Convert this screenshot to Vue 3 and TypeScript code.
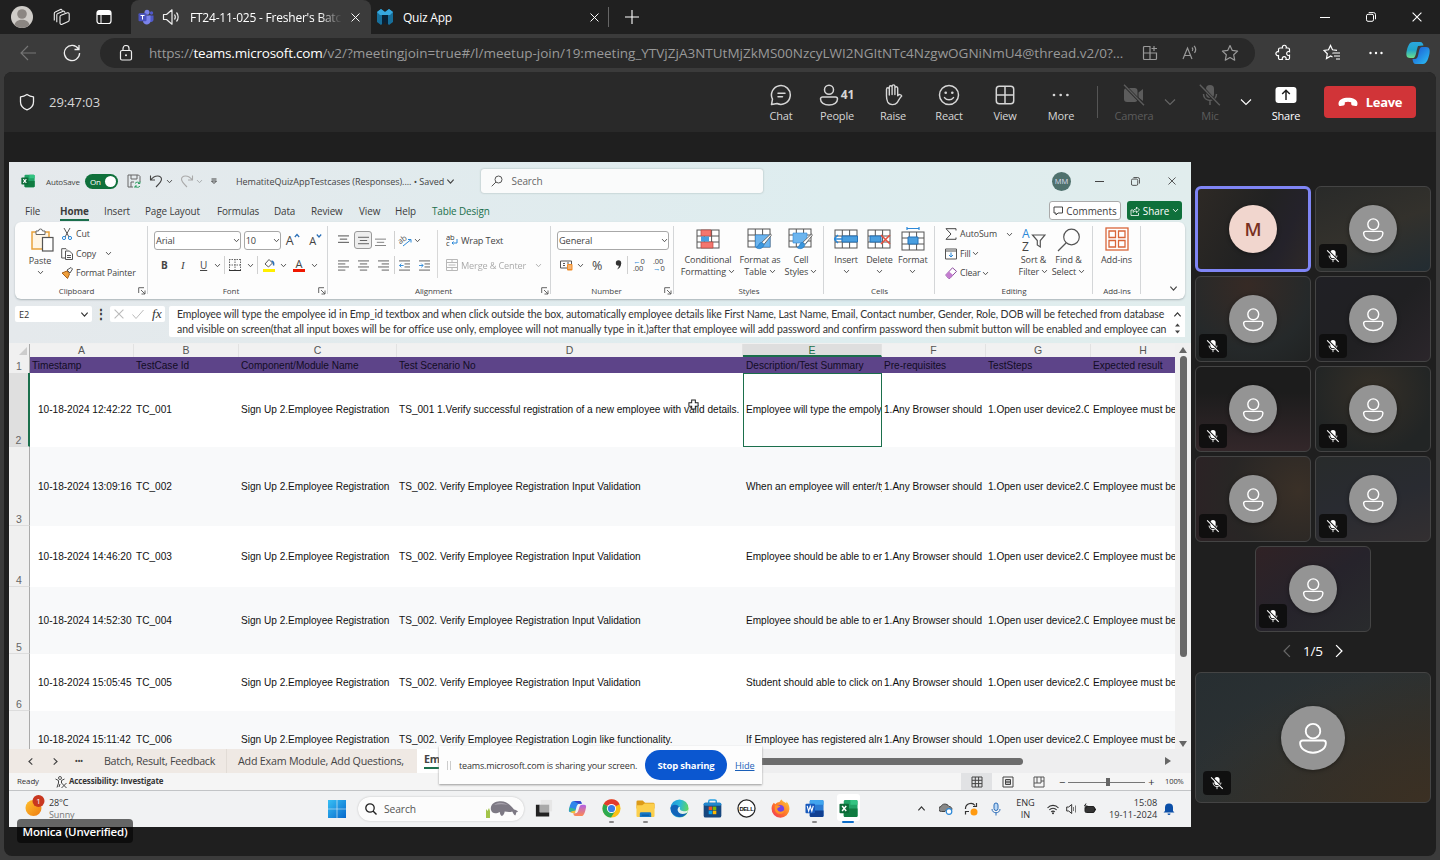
<script setup lang="ts">
interface MeetingAction { label: string; icon: string; count?: number }
interface RibbonTab { label: string; width: number; kind?: string }
interface SheetRow { id: number; height: number; cells: string[] }
interface Tile { tone: string; initial?: string }

const actions: MeetingAction[] = [
  { label: 'Chat', icon: 'chat' },
  { label: 'People', icon: 'people', count: 41 },
  { label: 'Raise', icon: 'hand' },
  { label: 'React', icon: 'smile' },
  { label: 'View', icon: 'view' },
  { label: 'More', icon: 'more' },
]

const ribbonTabs: RibbonTab[] = [
  { label: 'File', width: 35 },
  { label: 'Home', width: 44, kind: 'current' },
  { label: 'Insert', width: 41 },
  { label: 'Page Layout', width: 72 },
  { label: 'Formulas', width: 57 },
  { label: 'Data', width: 37 },
  { label: 'Review', width: 48 },
  { label: 'View', width: 36 },
  { label: 'Help', width: 37 },
  { label: 'Table Design', width: 70, kind: 'context' },
]

const columns = ['A', 'B', 'C', 'D', 'E', 'F', 'G', 'H']
const headings = ['Timestamp', 'TestCase Id', 'Component/Module Name', 'Test Scenario No', 'Description/Test Summary', 'Pre-requisites', 'TestSteps', 'Expected result']

const makeRow = (id: number, height: number, time: string, scenario: string, summary: string): SheetRow => ({
  id,
  height,
  cells: [
    `10-18-2024 ${time}`,
    `TC_00${id - 1}`,
    'Sign Up 2.Employee Registration',
    scenario,
    summary,
    '1.Any Browser should',
    '1.Open user device2.Open',
    'Employee must be able',
  ],
})

const validation = 'TS_002. Verify Employee Registration Input Validation'
const rows: SheetRow[] = [
  makeRow(2, 74, '12:42:22', 'TS_001 1.Verify successful registration of a new employee with valid details.', 'Employee will type the empolyee id'),
  makeRow(3, 79, '13:09:16', validation, 'When an employee will enter/type'),
  makeRow(4, 61, '14:46:20', validation, 'Employee should be able to enter'),
  makeRow(5, 67, '14:52:30', validation, 'Employee should be able to enter'),
  makeRow(6, 57, '15:05:45', validation, 'Student should able to click on'),
  makeRow(7, 58, '15:11:42', 'TS_002. Verify Employee Registration Login like functionality.', 'If Employee has registered already'),
]

const tiles: Tile[] = [
  { tone: 't1', initial: 'M' }, { tone: 't2' }, { tone: 't3' }, { tone: 't4' }, { tone: 't5' },
  { tone: 't6' }, { tone: 't7' }, { tone: 't8' }, { tone: 't9' },
]

const taskbarApps = ['taskview', 'copilot2', 'chrome', 'folder', 'edge', 'store', 'dell', 'firefox', 'word', 'excel']
</script>

<template>
  <div class="screen">
    <svg class="defs" aria-hidden="true">
      <defs>
        <linearGradient id="gTeal" x1="0" y1="0" x2="0" y2="1"><stop offset="0" stop-color="#29a8e0" /><stop offset=".5" stop-color="#22a5c8" /><stop offset="1" stop-color="#6ee08a" /></linearGradient>
        <linearGradient id="gBlue" x1="0" y1="0" x2="1" y2="1"><stop offset="0" stop-color="#1a4fd0" /><stop offset="1" stop-color="#2cc3f5" /></linearGradient>
        <linearGradient id="gPink" x1="0" y1="0" x2="0" y2="1"><stop offset="0" stop-color="#b060e8" /><stop offset="1" stop-color="#ff8a50" /></linearGradient>
        <linearGradient id="gSun" x1="0" y1="0" x2="1" y2="1"><stop offset="0" stop-color="#ffc22e" /><stop offset="1" stop-color="#ee7a10" /></linearGradient>
        <linearGradient id="gWin" x1="0" y1="0" x2="1" y2="1"><stop offset="0" stop-color="#38c0f5" /><stop offset="1" stop-color="#0568cc" /></linearGradient>
        <linearGradient id="gEdge" x1="0" y1=".3" x2="1" y2=".5"><stop offset="0" stop-color="#1c96dc" /><stop offset=".5" stop-color="#2cb8d8" /><stop offset="1" stop-color="#62d85c" /></linearGradient>
        <linearGradient id="gFox" x1="1" y1="0" x2="0" y2="1"><stop offset="0" stop-color="#ffd23c" /><stop offset=".5" stop-color="#ff7a2a" /><stop offset="1" stop-color="#f0305c" /></linearGradient>
      </defs>
      <symbol id="chev" viewBox="0 0 10 10"><path d="M1.500 3l3.500 3.700L8.500 3" fill="none" stroke="currentColor" stroke-width="1.300" /></symbol>
      <symbol id="chev-thin" viewBox="0 0 12 12"><path d="M1 3.500l5 5 5-5" fill="none" stroke="currentColor" stroke-width="1.100" /></symbol>
      <symbol id="x" viewBox="0 0 10 10"><path d="M.6.6l8.800 8.800M9.400.6L.6 9.400" fill="none" stroke="currentColor" stroke-width="1.100" /></symbol>
      <symbol id="restore" viewBox="0 0 10 10"><g fill="none" stroke="currentColor"><rect x=".5" y="2.300" width="7" height="7" rx="1.500" /><path d="M2.700.6H7.500a2 2 0 012 2V7.300" /></g></symbol>
      <symbol id="chat" viewBox="0 0 22 22"><g fill="none" stroke="currentColor" stroke-width="1.500" stroke-linecap="round"><path d="M1.500 20.500l1-5.300A9.400 9.400 0 117 19.500z" stroke-linejoin="round" /><path d="M8 9.200h7M8 12.800h4.500" /></g></symbol>
      <symbol id="people" viewBox="0 0 22 22"><g fill="none" stroke="currentColor" stroke-width="1.500"><circle cx="11" cy="5.700" r="4.500" /><path d="M4.500 13h13a2 2 0 012 2c0 3.500-3.500 6-8.500 6s-8.500-2.500-8.500-6a2 2 0 012-2z" /></g></symbol>
      <symbol id="hand" viewBox="0 0 22 22"><path d="M4.500 12V5.200a1.400 1.400 0 012.800 0V11 3.200a1.400 1.400 0 012.800 0V10.500 2.300a1.400 1.400 0 012.800 0V10.500 4.200a1.400 1.400 0 012.800 0v7.500c1.300-1.600 3.300-1.500 4 .3-2.200 2-2.900 4.500-4.700 6.800-1.700 2.200-7.500 2.800-9.300-.8-.7-1.500-1.200-3.500-1.200-6z" fill="none" stroke="currentColor" stroke-width="1.400" stroke-linejoin="round" /></symbol>
      <symbol id="smile" viewBox="0 0 22 22"><circle cx="11" cy="11" r="9.500" fill="none" stroke="currentColor" stroke-width="1.500" /><circle cx="7.700" cy="8.800" r="1.300" fill="currentColor" /><circle cx="14.300" cy="8.800" r="1.300" fill="currentColor" /><path d="M6.500 13.600c2.300 3 6.700 3 9 0" fill="none" stroke="currentColor" stroke-width="1.500" stroke-linecap="round" /></symbol>
      <symbol id="view" viewBox="0 0 22 22"><g fill="none" stroke="currentColor" stroke-width="1.500"><rect x="2.300" y="2.300" width="17.400" height="17.400" rx="3" /><path d="M11 2.300v17.400M2.300 11h17.400" /></g></symbol>
      <symbol id="more" viewBox="0 0 22 22"><g fill="currentColor"><circle cx="4" cy="11" r="1.350" /><circle cx="10.700" cy="11" r="1.350" /><circle cx="17.400" cy="11" r="1.350" /></g></symbol>
      <symbol id="person" viewBox="0 0 24 26"><g fill="none" stroke="#fff" stroke-width="1.500"><circle cx="12" cy="7.500" r="5.800" /><path d="M3.700 15h16.600a2 2 0 012 2c0 4.200-4.300 7.800-10.300 7.800S1.700 21.200 1.700 17a2 2 0 012-2z" /></g></symbol>
      <symbol id="muted" viewBox="0 0 16 16"><rect x="5" y="1" width="6" height="9.500" rx="3" fill="#fff" /><path d="M3.500 7.500c0 6.200 9 6.200 9 0M8 12v3" fill="none" stroke="#eee" stroke-width="1.100" /><path d="M2.500 1.500l12.500 12.500" stroke="#111" stroke-width="1.500" /><path d="M1.300 1.500l13.200 13.200" stroke="#fff" stroke-width="1.200" /></symbol>
      <symbol id="launcher" viewBox="0 0 8 8"><path d="M.7 6V.7H6M3 3l4 4M7 3.500V7H3.500" fill="none" stroke="#555" stroke-width=".9" /></symbol>
      <symbol id="sheet" viewBox="0 0 24 20"><g fill="#fff" stroke="#555"><rect x="1" y="1" width="22" height="18" /><path d="M1 7h22M1 13h22M8.300 1v18M15.600 1v18" /></g></symbol>
      <symbol id="brush" viewBox="0 0 20 20"><path d="M18.500 1L8 11l2.500 2.500L19 3z" fill="#fff" stroke="#555" /><path d="M8 11c-4 0-3 5-7 6 4 3 9 1 9.500-3.500z" fill="#3a96dd" stroke="#2472b8" stroke-width=".7" /></symbol>
      <symbol id="excel" viewBox="0 0 20 20"><rect x="5" y="1" width="14.500" height="18" rx="1.500" fill="#21a366" /><path d="M12 1h6a1.500 1.500 0 011.500 1.500V6H12z" fill="#33c481" /><path d="M5 10h14.500v7.500A1.500 1.500 0 0118 19H6.500A1.500 1.500 0 015 17.500z" fill="#107c41" /><rect x=".5" y="5" width="10" height="10" rx="1" fill="#0d6b38" /><path d="M3.300 7.300l4.300 5.400M7.600 7.300l-4.300 5.400" stroke="#fff" stroke-width="1.500" /></symbol>
      <symbol id="word" viewBox="0 0 20 20"><rect x="5" y="1" width="14.500" height="18" rx="1.500" fill="#2b7cd3" /><path d="M6.500 1H18a1.500 1.500 0 011.500 1.500V6H5V2.500A1.500 1.500 0 016.500 1z" fill="#41a5ee" /><path d="M5 12h14.500v5.500A1.500 1.500 0 0118 19H6.500A1.500 1.500 0 015 17.500z" fill="#103f91" /><rect x=".5" y="5" width="10" height="10" rx="1" fill="#185abd" /><path d="M2.300 7.300l1.500 5.400 1.700-5 1.700 5 1.500-5.400" stroke="#fff" stroke-width="1.200" fill="none" /></symbol>
      <symbol id="taskview" viewBox="0 0 20 20"><rect x="7" y="1" width="12" height="12" fill="#e6e6e6" /><path d="M2 6h4v8h10v4.500H2z" fill="#222" /><rect x="6" y="6" width="10" height="8" fill="#a9a9a9" /></symbol>
      <symbol id="copilot2" viewBox="0 0 20 20"><path d="M6 2h6c2 0 2 1.500 2.500 3H12c-2 0-2.500 1.500-3.500 5-.8 3-1.500 4-3.500 4H3c-3 0-2-3-1.500-5C2.500 5 3.500 2 6 2z" fill="#2f86ea" /><path d="M14 18H8c-2 0-2-1.500-2.500-3H8c2 0 2.500-1.500 3.500-5 .8-3 1.500-4 3.500-4h2c3 0 2 3 1.500 5-1 4-2 7-4.500 7z" fill="url(#gPink)" /><path d="M2 13.500l6-2-.6 3.500H5.500c-1.500 0-2.500-.5-3.500-1.500z" fill="#f2c038" /><path d="M6 2h6c2 0 2 1.500 2.500 3H11z" fill="#3442cc" /><path d="M1.500 9L8 10.500 7.300 12 2 13.500C1 12.500 1.200 10.500 1.500 9z" fill="#35b890" /></symbol>
      <symbol id="chrome" viewBox="0 0 20 20"><circle cx="10" cy="10" r="9.500" fill="#fbc116" /><path d="M10 10L1.800 5.200A9.500 9.500 0 0118.500 5.500z" fill="#e33b2e" /><path d="M10 10L1.800 5.200A9.500 9.500 0 009.500 19.500L14 12.300z" fill="#2da94f" /><circle cx="10" cy="10" r="4.800" fill="#fff" /><circle cx="10" cy="10" r="3.800" fill="#3a7de8" /></symbol>
      <symbol id="folder" viewBox="0 0 20 20"><path d="M.5 3a1.500 1.500 0 011.500-1.500h5L9.500 4H18a1.500 1.500 0 011.500 1.500V10H.5z" fill="#dc9a18" /><path d="M.5 6.500h6L9 4.700h9.500a1 1 0 011 1V18a1 1 0 01-1 1h-17a1 1 0 01-1-1z" fill="#fccf4c" /><path d="M4 19v-3.500a1.500 1.500 0 011.500-1.500h9a1.500 1.500 0 011.500 1.500V19z" fill="#1478c8" /><path d="M6 17h8" stroke="#0a4f94" /></symbol>
      <symbol id="edge" viewBox="0 0 20 20"><circle cx="10" cy="10" r="9.500" fill="url(#gEdge)" /><path d="M.6 9c2-4 7.500-3.500 8.900-.5-2.500 2-1.500 5.500 1.500 6.800 2.500 1 5 .3 7.200-1A9.500 9.500 0 01.6 9z" fill="#1163b8" /><path d="M10.700 8.500c-1.200 2.500.8 4.500 4 4.400 1.800-.1 3.500-.6 4.600-1.400l-1.100 2.800c-2.200 1.300-4.700 2-7.200 1-3-1.300-4-4.800-1.500-6.800z" fill="#f4f4f4" opacity=".9" /></symbol>
      <symbol id="store" viewBox="0 0 20 20"><path d="M6 5V2.500A1.500 1.500 0 017.500 1h5A1.500 1.500 0 0114 2.500V5" fill="none" stroke="#2ba3e3" stroke-width="1.500" /><rect x=".7" y="4" width="18.600" height="15.500" rx="2" fill="#17477e" /><rect x=".7" y="4" width="18.600" height="3" rx="1.500" fill="#2187cd" /><path d="M6 8h3.700v3.700H6z" fill="#f25022" /><path d="M10.300 8H14v3.700h-3.700z" fill="#7fba00" /><path d="M6 12.300h3.700V16H6z" fill="#00a4ef" /><path d="M10.300 12.300H14V16h-3.700z" fill="#ffb900" /></symbol>
      <symbol id="dell" viewBox="0 0 20 20"><circle cx="10" cy="10" r="9" fill="#fff" stroke="#222" stroke-width="1.300" /><text x="10" y="12.300" font-size="6.200" font-weight="bold" font-family="Liberation Sans, sans-serif" text-anchor="middle" textLength="15" fill="#111">DELL</text></symbol>
      <symbol id="firefox" viewBox="0 0 20 20"><path d="M3 4l1.500 1.500C6 3.800 8 3 9 3.200c.5-1.200 1-2 2.500-2.700 0 2 2.500 2.500 4.500 4 .4-.8.2-1.500 0-2 2.500 2 3.500 5 3.400 8A9.400 9.400 0 01.6 10C.6 7.500 1.500 5.500 3 4z" fill="url(#gFox)" /><circle cx="9.500" cy="10.500" r="4.300" fill="#7542e5" /><path d="M4 7c2-1 4 .3 6 .5-1 1.500-3 1-3.500 3 .5 3 5 4 7.500 1 0 5-8 6-10 0z" fill="#ff9428" /></symbol>
    </svg>

    <header class="tabstrip">
      <svg class="i22" viewBox="0 0 22 22"><circle cx="11" cy="11" r="11" fill="#cfccc8" /><circle cx="11" cy="8" r="4.800" fill="#8b8682" /><path d="M3.500 19c1-7 14-7 15 0a11 11 0 01-15 0z" fill="#8b8682" /></svg>
      <svg class="i18 spaces" viewBox="0 0 18 18"><g fill="none" stroke="#eee" stroke-width="1.100" stroke-linejoin="round"><path d="M1.300 12.500V5.500a1.500 1.500 0 011-1.500L8 1.200l1.500 1.500" /><path d="M3.800 14.300V7a1.500 1.500 0 011-1.400l6-2.600 1.500 1.700" /><path d="M7 8.700a1.500 1.500 0 011-1.400l6.500-2.500a1.300 1.300 0 011.700 1.300V12a1.500 1.500 0 01-1 1.400l-6 2.900A1.500 1.500 0 017 15z" /></g></svg>
      <svg class="i16 tabmenu" viewBox="0 0 16 16"><rect x="1" y="1.500" width="14" height="13" rx="2.500" fill="none" stroke="#fff" stroke-width="1.200" /><path d="M1 6V3.500a2.500 2.500 0 012.500-2h9a2.500 2.500 0 012.500 2V6z" fill="#fff" /><path d="M5 6v8.500" stroke="#fff" /></svg>
      <div class="tab active">
        <svg class="i16" viewBox="0 0 16 16"><circle cx="9" cy="3.200" r="2.500" fill="#7b83eb" /><circle cx="13.500" cy="4" r="1.700" fill="#5059c9" /><path d="M11 6.500h4.500V11a2.500 2.500 0 01-4.500 1z" fill="#5059c9" /><path d="M5 6.500h7.500V12c0 4.500-7.500 4.500-7.500 0z" fill="#7b83eb" /><rect x=".5" y="4.300" width="8" height="8" rx="1" fill="#4b53bc" /><path d="M2.500 6.500h4M4.500 6.500v4" stroke="#fff" /></svg>
        <svg class="i18" viewBox="0 0 18 18"><g fill="none" stroke="#eee" stroke-width="1.200" stroke-linejoin="round"><path d="M1.500 6.500h3L10 1.800v14.400L4.500 11.500h-3zM12.500 6.500c1 1.500 1 3.500 0 5M14.500 4.500c2.200 2.500 2.200 6.500 0 9" /></g></svg>
        <span class="tab-title">FT24-11-025 - Fresher's Batch</span>
        <svg class="i9"><use href="#x" /></svg>
      </div>
      <div class="tab second">
        <svg class="i16" viewBox="0 0 16 16"><path d="M0 3l4-3 4 3 4-3 4 3v10l-4 3-2-2V8H6v6l-2 2-4-3z" fill="#176f9b" /><path d="M0 3l4-3 4 3 4-3 4 3-3 3H3z" fill="#36a8df" /><path d="M5 6h6v9H9L8 12l-1 3H5z" fill="#082237" /></svg>
        <span>Quiz App</span>
        <svg class="i9"><use href="#x" /></svg>
      </div>
      <svg class="i14 newtab" viewBox="0 0 14 14"><path d="M7 0v14M0 7h14" stroke="#fff" stroke-width="1.100" /></svg>
      <div class="window-buttons">
        <svg class="i10" viewBox="0 0 10 10"><path d="M0 5.500h10" stroke="#fff" /></svg>
        <svg class="i10"><use href="#restore" /></svg>
        <svg class="i10"><use href="#x" /></svg>
      </div>
    </header>

    <div class="toolbar">
      <svg class="i16 back" viewBox="0 0 16 16"><path d="M16 8H1M8 1L1 8l7 7" fill="none" stroke="#777" stroke-width="1.100" /></svg>
      <svg class="i18 reload" viewBox="0 0 18 18"><path d="M15.500 5A7.600 7.600 0 1016.600 9M16 1v4.500h-4.500" fill="none" stroke="#eee" stroke-width="1.300" /></svg>
      <div class="address">
        <svg class="i16" viewBox="0 0 16 16"><rect x="2.500" y="5.500" width="11" height="9.500" rx="1.500" fill="none" stroke="#eee" stroke-width="1.200" /><path d="M5 5.500V3.500a3 3 0 016 0v2" fill="none" stroke="#eee" stroke-width="1.200" /><circle cx="8" cy="10.300" r="1" fill="#eee" /></svg>
        <span class="url">https://<b>teams.microsoft.com</b><span class="path">/v2/?meetingjoin=true#/l/meetup-join/19:meeting_YTVjZjA3NTUtMjZkMS00NzcyLWI2NGItNTc4NzgwOGNiNmU4@thread.v2/0?...</span></span>
        <svg class="i16" viewBox="0 0 16 16"><path d="M1.500 8h13v5.500a1 1 0 01-1 1h-11a1 1 0 01-1-1v-11a1 1 0 011-1H8v13M12 1v5M9.500 3.500h5.500" fill="none" stroke="#999" stroke-width="1.200" /></svg>
        <svg class="i16" viewBox="0 0 16 16"><path d="M1 14L5.500 3 10 14M2.700 10.500h5.800M10 2.500c1 1 1 2.500.3 3.500M12 .8c2 2 2 4.800.5 7" fill="none" stroke="#999" stroke-width="1.200" /></svg>
        <svg class="i18" viewBox="0 0 18 18"><path d="M9 1.500l2.300 4.900 5.300.7-3.900 3.700 1 5.400L9 13.500l-4.700 2.700 1-5.400L1.400 7.100l5.300-.7z" fill="none" stroke="#999" stroke-width="1.200" stroke-linejoin="round" /></svg>
      </div>
      <svg class="i18" viewBox="0 0 18 18"><path d="M5 4h2.500a2 2 0 113.700 0H13a1.500 1.500 0 011.500 1.500v2.200a2 2 0 100 3.600V14a1.500 1.500 0 01-1.500 1.500h-2a2 2 0 10-3.600 0H5A1.500 1.500 0 013.500 14v-2.500a2 2 0 110-3.800V5.500A1.500 1.500 0 015 4z" fill="none" stroke="#fff" stroke-width="1.200" /></svg>
      <i class="bar-line"></i>
      <svg class="i18" viewBox="0 0 18 18"><path d="M9.500 12.900l-1.800-1L3.500 14.500l.8-4.800L1 6.500l4.500-.7L7.500 1.500l2 4.300 4.500.5M11 9h6M11 12h6M13 15h4M10.500 8.500l-.8 1.200" fill="none" stroke="#fff" stroke-width="1.200" /></svg>
      <svg class="i14 dots" viewBox="0 0 14 14"><g fill="#fff"><circle cx="1.500" cy="7" r="1.200" /><circle cx="7" cy="7" r="1.200" /><circle cx="12.500" cy="7" r="1.200" /></g></svg>
      <svg class="i24" viewBox="0 0 24 24"><path d="M7 1h7c2.500 0 3 2 3.500 3.500L12 5c-1.500 3-2 12-4.500 12H4C.5 17 0 14 .5 11 1.500 6 3 1 7 1z" fill="url(#gTeal)" /><path d="M17 23h-7c-2.500 0-3-2-3.500-5h2.500c3 0 3-4 4-8s2-4 4-4h3c4 0 4 3.500 3.500 6.500C22.500 17 21 23 17 23z" fill="url(#gBlue)" /></svg>
    </div>

    <main class="meeting">
      <div class="meeting-bar">
        <svg class="i18 shield" viewBox="0 0 18 18"><path d="M9 1.500c2 1.400 4 2.200 6.500 2.300V9c0 4-2.300 6.300-6.500 7.800C4.800 15.300 2.500 13 2.500 9V3.800C5 3.700 7 2.900 9 1.500z" fill="none" stroke="#eee" stroke-width="1.300" stroke-linejoin="round" /></svg>
        <time>29:47:03</time>
        <nav class="actions">
          <button v-for="a in actions" :key="a.label" class="action">
            <span class="glyph"><svg class="i22"><use :href="'#' + a.icon" /></svg><b v-if="a.count">{{ a.count }}</b></span>
            <span>{{ a.label }}</span>
          </button>
        </nav>
        <i class="meeting-line"></i>
        <button class="action off">
          <span class="glyph"><svg class="i22" viewBox="0 0 22 22"><rect x="1" y="4" width="13.500" height="14" rx="3" fill="#5c5c5c" /><path d="M15.500 8.500L20 5v12l-4.500-3.500z" fill="#5c5c5c" /><path d="M1 1l19.500 20" stroke="#292929" stroke-width="3" /><path d="M1 .8l20 20.500" stroke="#5c5c5c" stroke-width="1.400" /></svg></span>
          <span>Camera</span>
        </button>
        <svg class="i12 dim"><use href="#chev-thin" /></svg>
        <button class="action off mic">
          <span class="glyph"><svg class="i22" viewBox="0 0 22 22"><rect x="7" y="1" width="8" height="13" rx="4" fill="#5c5c5c" /><path d="M4.500 10c0 8.500 13 8.500 13 0M11 16.500V21" fill="none" stroke="#5c5c5c" stroke-width="1.500" /><path d="M1.500 1l18 20" stroke="#292929" stroke-width="3" /><path d="M.8.8l20 20.500" stroke="#5c5c5c" stroke-width="1.400" /></svg></span>
          <span>Mic</span>
        </button>
        <svg class="i12 lit"><use href="#chev-thin" /></svg>
        <button class="action share">
          <span class="glyph"><svg class="i22" viewBox="0 0 22 22"><rect x=".5" y="3" width="21" height="16" rx="3" fill="#fff" /><path d="M11 16V6.500M7.200 10L11 6.200l3.800 3.800" fill="none" stroke="#222" stroke-width="1.500" /></svg></span>
          <span>Share</span>
        </button>
        <button class="leave"><svg viewBox="0 0 20 10"><path d="M10 .8c5 0 9.500 2 9.500 5.700 0 2-.8 2.700-2 2.500l-3-.6c-1-.2-1.300-.8-1.300-1.600V5.300c-2-.7-4.400-.7-6.400 0v1.500c0 .8-.3 1.400-1.300 1.600l-3 .6C1.300 9.200.5 8.500.5 6.500.5 2.800 5 .8 10 .8z" fill="#fff" /></svg>Leave</button>
      </div>

      <div class="stage">
        <section class="shared">
          <div class="titlebar">
            <svg class="i14"><use href="#excel" /></svg>
            <span class="autosave">AutoSave</span>
            <span class="toggle">On<i></i></span>
            <svg class="i14" viewBox="0 0 14 14"><path d="M1 1h10.500L13 2.500V8M6 13H1V1M4 1v4h6V1M4 13V8h3" fill="none" stroke="#666" /><path d="M13 9.500a3 3 0 00-5 0M8 12a3 3 0 005 0M13 7.500v2h-2M8 14v-2h2" fill="none" stroke="#2f9e62" /></svg>
            <svg class="i14" viewBox="0 0 14 14"><path d="M1.500 1.500V6H6M1.500 6C6 .5 12 1 12.500 5c.2 2-1 3.500-5.500 8" fill="none" stroke="#444" stroke-width="1.100" /></svg>
            <svg class="i7"><use href="#chev" /></svg>
            <svg class="i14" viewBox="0 0 14 14"><path d="M12.500 1.500V6H8M12.500 6C8 .5 2 1 1.500 5c-.2 2 1 3.500 5.500 8" fill="none" stroke="#aaa" stroke-width="1.100" /></svg>
            <svg class="i7 faded"><use href="#chev" /></svg>
            <svg class="i8 customise" viewBox="0 0 8 8"><path d="M1.500 2h5M1.500 4L4 6.500 6.500 4z" fill="none" stroke="#444" /></svg>
            <span class="filename">HematiteQuizAppTestcases (Responses).... • Saved</span>
            <svg class="i9c"><use href="#chev" /></svg>
            <div class="search"><svg class="i12" viewBox="0 0 12 12"><circle cx="7.500" cy="4.500" r="3.500" fill="none" stroke="#555" /><path d="M5 7L.7 11.300" stroke="#555" /></svg>Search</div>
            <span class="initials">MM</span>
            <svg class="i9 end" viewBox="0 0 9 9"><path d="M0 4.500h9" stroke="#444" /></svg>
            <svg class="i9c end"><use href="#restore" /></svg>
            <svg class="i8 end"><use href="#x" /></svg>
          </div>

          <div class="ribbon-tabs">
            <span v-for="t in ribbonTabs" :key="t.label" :style="{ width: t.width + 'px' }"><em :class="t.kind">{{ t.label }}</em></span>
            <button class="comments"><svg class="i10" viewBox="0 0 10 10"><path d="M1 1h8.500v6H5L3 9V7H1z" fill="none" stroke="#444" /></svg>Comments</button>
            <button class="share-doc"><svg class="i10" viewBox="0 0 10 10"><path d="M3 4H1v5.500h7.500V7M3 6.500C3 4 4.500 3 6.500 3V1l3 3-3 2.700V5C5 5 4 5.500 3 6.500z" fill="none" stroke="#fff" stroke-width=".8" /></svg>Share<svg class="i7"><use href="#chev" /></svg></button>
          </div>

          <div class="ribbon">
            <section class="group clipboard">
              <div class="body">
                <div class="big"><svg class="i24" viewBox="0 0 24 24"><path d="M2 4h17v17H2z" fill="#fff6e6" stroke="#e8a33d" stroke-width="1.500" /><path d="M6 6.500V3h2.500a2 2 0 014 0H15v3.500z" fill="#fff" stroke="#666" /><rect x="12.500" y="9.500" width="10.500" height="13.500" fill="#fff" stroke="#555" stroke-width="1.200" /></svg><span>Paste</span><svg class="i7"><use href="#chev" /></svg></div>
                <div class="stack">
                  <div><svg class="i12" viewBox="0 0 12 12"><path d="M3 0l5 9M9 0L4 9" stroke="#555" /><circle cx="3" cy="10" r="1.600" fill="none" stroke="#2b88d8" /><circle cx="9" cy="10" r="1.600" fill="none" stroke="#2b88d8" /></svg>Cut</div>
                  <div><svg class="i12" viewBox="0 0 12 12"><path d="M4 10H.7V.7H5l1 1M4.500 3h4l3 3v5.500h-7zM6 7.500h4M6 9.500h4" fill="none" stroke="#555" /></svg>Copy<svg class="i7 gap"><use href="#chev" /></svg></div>
                  <div><svg class="i12" viewBox="0 0 12 12"><path d="M1 6l5-2 2.500 3-2 4.500z" fill="#f0a03c" stroke="#a96018" /><path d="M6 3l4-2.500L11.500 2 9 6z" fill="#fff" stroke="#555" /></svg>Format Painter</div>
                </div>
              </div>
              <footer>Clipboard<svg class="i8"><use href="#launcher" /></svg></footer>
            </section>

            <section class="group font">
              <div class="body column">
                <div class="line font-1"><span class="select">Arial<svg class="i7"><use href="#chev" /></svg></span><span class="select">10<svg class="i7"><use href="#chev" /></svg></span><span class="grow-a">A<svg class="i6" viewBox="0 0 6 6"><path d="M.8 4L3 1.500 5.200 4" fill="none" stroke="#2b70b8" stroke-width="1.200" /></svg></span><span class="grow-a small">A<svg class="i6" viewBox="0 0 6 6"><path d="M.8 1.500L3 4l2.200-2.500" fill="none" stroke="#2b70b8" stroke-width="1.200" /></svg></span></div>
                <div class="line font-2"><b>B</b><i>I</i><u>U</u><svg class="i7"><use href="#chev" /></svg><hr><svg class="i12" viewBox="0 0 12 12"><path d="M0 .5h12M0 6h12M.5 0v12M6 0v12M11.500 0v12" stroke="#666" stroke-dasharray="1.500 1" /><path d="M0 11.500h12" stroke="#333" /></svg><svg class="i7"><use href="#chev" /></svg><hr><svg class="i14" viewBox="0 0 14 14"><path d="M3 6l4-4.500L10.500 5 6.500 9z" fill="#fff" stroke="#555" /><path d="M9.500 3c2 .5 2.500 2 2 4.500" fill="none" stroke="#2b70b8" stroke-width="1.500" /><path d="M1 11h12v3H1z" fill="#ffef00" /></svg><svg class="i7"><use href="#chev" /></svg><span class="colour-a">A</span><svg class="i7"><use href="#chev" /></svg></div>
              </div>
              <footer>Font<svg class="i8"><use href="#launcher" /></svg></footer>
            </section>

            <section class="group alignment">
              <div class="body">
                <div class="column">
                  <div class="line align-row"><svg class="i12" viewBox="0 0 12 12"><path d="M0 1h12M2 4.500h8M0 8h12" stroke="#444" /></svg><span class="pressed"><svg class="i12" viewBox="0 0 12 12"><path d="M0 2.500h12M2 6h8M0 9.500h12" stroke="#555" /></svg></span><svg class="i12" viewBox="0 0 12 12"><path d="M0 4.500h12M2 8h8M0 11.500h12" stroke="#777" /></svg><hr><svg class="i14" viewBox="0 0 14 14"><text x="0" y="9" font-size="8" font-family="Open Sans, sans-serif" transform="rotate(-35 5 7)" fill="#555">ab</text><path d="M5 13l7.500-6M10 6.500h3V9.500" fill="none" stroke="#2b88d8" /></svg><svg class="i7"><use href="#chev" /></svg></div>
                  <div class="line align-row"><svg class="i12" viewBox="0 0 12 12"><path d="M0 1h12M0 4.300h8M0 7.600h12M0 11h8" stroke="#555" /></svg><svg class="i12" viewBox="0 0 12 12"><path d="M0 1h12M2 4.300h8M0 7.600h12M2 11h8" stroke="#555" /></svg><svg class="i12" viewBox="0 0 12 12"><path d="M0 1h12M4 4.300h8M0 7.600h12M4 11h8" stroke="#555" /></svg><hr><svg class="i12" viewBox="0 0 12 12"><path d="M0 1h12M6 4.300h6M6 7.600h6M0 11h12" stroke="#555" /><path d="M5 6H.5M2.500 4l-2 2 2 2" fill="none" stroke="#2b88d8" /></svg><svg class="i12" viewBox="0 0 12 12"><path d="M0 1h12M6 4.300h6M6 7.600h6M0 11h12" stroke="#555" /><path d="M0 6h4.500M2.500 4l2 2-2 2" fill="none" stroke="#2b88d8" /></svg></div>
                </div>
                <i class="split"></i>
                <div class="column wrap">
                  <div class="line"><svg class="i12" viewBox="0 0 12 12"><text x="0" y="6" font-size="7.500" font-family="Open Sans, sans-serif" fill="#333">ab</text><text x="0" y="12" font-size="7.500" font-family="Open Sans, sans-serif" fill="#333">c</text><path d="M11 5v4H6M7.500 7.500L6 9l1.500 1.500" fill="none" stroke="#2b88d8" /></svg>Wrap Text</div>
                  <div class="line disabled"><svg class="i12" viewBox="0 0 12 12"><path d="M.5.5h11v11H.5zM.5 3.500h11M.5 8.500h11M6 .5v3M6 8.500v3M2.500 6h7" fill="none" stroke="#666" /></svg>Merge &amp; Center<svg class="i7 gap"><use href="#chev" /></svg></div>
                </div>
              </div>
              <footer>Alignment<svg class="i8"><use href="#launcher" /></svg></footer>
            </section>

            <section class="group number">
              <div class="body column">
                <div class="line"><span class="select wide">General<svg class="i7"><use href="#chev" /></svg></span></div>
                <div class="line number-2"><svg class="i13" viewBox="0 0 13 12"><path d="M.5 2h11v7H.5zM3 4.500h2M3 6.500h2M7 4h2" fill="none" stroke="#555" /><rect x="7" y="5" width="5.500" height="6.500" rx="1" fill="#f08a24" /><path d="M8 7h3.500M8 9h3.500" stroke="#fff" stroke-width=".7" /></svg><svg class="i7"><use href="#chev" /></svg><span class="percent">%</span><svg class="comma" viewBox="0 0 7 10"><circle cx="3.500" cy="3" r="2.700" fill="#333" /><path d="M6.200 3c0 3.500-1.700 5.500-4.200 6.500 1.200-1.500 2-2.800 2-4.500z" fill="#333" /></svg><hr><span class="dec"><s>←</s>0<br>.00</span><span class="dec">.00<br><s>→</s>0</span></div>
              </div>
              <footer>Number<svg class="i8"><use href="#launcher" /></svg></footer>
            </section>

            <section class="group styles">
              <div class="body">
                <div class="big"><svg class="i24" viewBox="0 0 24 20"><use href="#sheet" /><path d="M5 1h10v6H5zM5 13h12v6H5z" fill="#f4766e" stroke="#b8483f" stroke-width=".7" /><path d="M5 7.500h8v5H5z" fill="#4a9fe0" /></svg><span>Conditional<br>Formatting <svg class="i7"><use href="#chev" /></svg></span></div>
                <div class="big"><svg class="i26" viewBox="0 0 26 22"><use href="#sheet" width="24" height="20" /><path d="M8.500 7H23v12H8.500z" fill="#6db5ee" stroke="#2b88d8" stroke-width=".6" /><use href="#brush" x="8" y="5" width="17" height="17" /></svg><span>Format as<br>Table <svg class="i7"><use href="#chev" /></svg></span></div>
                <div class="big"><svg class="i26" viewBox="0 0 26 22"><use href="#sheet" width="24" height="20" /><path d="M5 5h14v10H5z" fill="#6db5ee" stroke="#2b88d8" stroke-width=".6" /><use href="#brush" x="8" y="5" width="17" height="17" /></svg><span>Cell<br>Styles <svg class="i7"><use href="#chev" /></svg></span></div>
              </div>
              <footer>Styles</footer>
            </section>

            <section class="group cells">
              <div class="body">
                <div class="big"><svg class="i24" viewBox="0 0 24 20"><use href="#sheet" /><path d="M8 7h15.500v6H8z" fill="#4a9fe0" stroke="#2472b8" /><path d="M9 10H0M4 6l-4 4 4 4" fill="none" stroke="#2b88d8" stroke-width="1.500" /></svg><span>Insert</span><svg class="i7"><use href="#chev" /></svg></div>
                <div class="big"><svg class="i24" viewBox="0 0 24 20"><use href="#sheet" /><path d="M3 7h11v6H3z" fill="#4a9fe0" stroke="#2472b8" /><path d="M14 6l9 9M23 6l-9 9" stroke="#e8503f" stroke-width="1.500" /></svg><span>Delete</span><svg class="i7"><use href="#chev" /></svg></div>
                <div class="big"><svg class="i24" viewBox="0 0 24 24"><use href="#sheet" y="4" width="24" height="20" /><path d="M7 10h10v7H7z" fill="#4a9fe0" stroke="#2472b8" /><path d="M6 1.500h12M6 0v3M18 0v3" stroke="#2b88d8" stroke-width="1.200" /></svg><span>Format</span><svg class="i7"><use href="#chev" /></svg></div>
              </div>
              <footer>Cells</footer>
            </section>

            <section class="group editing">
              <div class="body">
                <div class="stack">
                  <div><svg class="i12" viewBox="0 0 12 12"><path d="M11 2.500V.7H1L6 6l-5 5.300h10V9.500" fill="none" stroke="#444" /></svg>AutoSum<svg class="i7 gap"><use href="#chev" /></svg></div>
                  <div><svg class="i12" viewBox="0 0 12 12"><path d="M.5 1h11v10H.5zM.5 3h11" fill="none" stroke="#555" /><path d="M6 4.500V9M4 7l2 2 2-2" fill="none" stroke="#2b88d8" /></svg>Fill <svg class="i7 near"><use href="#chev" /></svg></div>
                  <div><svg class="i12" viewBox="0 0 12 12"><path d="M.7 8L7.500.8l4 3.500L5 11.300H3.500z" fill="#fff" stroke="#8a4a9c" /><path d="M.7 8L4 4.500l4 3.500-3 3.300H3.500z" fill="#c47dd0" /></svg>Clear <svg class="i7 near"><use href="#chev" /></svg></div>
                </div>
                <div class="big sort"><svg class="i24" viewBox="0 0 24 24"><text x="0" y="10" font-size="12" font-family="Open Sans, sans-serif" fill="#2b88d8">A</text><text x="0" y="22.500" font-size="12" font-family="Open Sans, sans-serif" fill="#444">Z</text><path d="M10.500 7h12.500l-4.700 5.500V19l-3-2v-4.500z" fill="none" stroke="#555" stroke-width="1.200" /></svg><span>Sort &amp;<br>Filter <svg class="i7"><use href="#chev" /></svg></span></div>
                <div class="big"><svg class="i24" viewBox="0 0 24 24"><circle cx="14.500" cy="9" r="7.800" fill="none" stroke="#555" stroke-width="1.200" /><path d="M9 15l-8 8" stroke="#555" stroke-width="1.300" /></svg><span>Find &amp;<br>Select <svg class="i7"><use href="#chev" /></svg></span></div>
              </div>
              <footer>Editing</footer>
            </section>

            <section class="group addins">
              <div class="body"><div class="big"><svg class="i24" viewBox="0 0 24 24"><g fill="#fff" stroke="#d9663a" stroke-width="1.300"><rect x="1" y="1" width="22" height="22" /><path d="M4 4h6.500v6.500H4zM13.500 4H20v6.500h-6.500zM4 13.500h6.500V20H4zM13.500 13.500H20V20h-6.500z" /></g></svg><span>Add-ins</span></div></div>
              <footer>Add-ins</footer>
            </section>
            <svg class="i9c collapse"><use href="#chev" /></svg>
          </div>

          <div class="formula-bar">
            <div class="name-box">E2<svg class="i9c"><use href="#chev" /></svg></div>
            <span class="grip">⋮</span>
            <div class="fx"><svg class="i10"><use href="#x" /></svg><svg class="i12" viewBox="0 0 12 12"><path d="M.5 6.500l3.500 4L11.500 2" fill="none" stroke="#bbb" /></svg><i>fx</i></div>
            <div class="formula">
              <p>Employee will type the empolyee id in Emp_id textbox and when click outside the box, automatically employee details like First Name, Last Name, Email, Contact number, Gender, Role, DOB will be feteched from database</p>
              <p class="second-line">and visible on screen(that all input boxes will be for office use only, employee will not manually type in it.)after that employee will add password and confirm password then submit button will be enabled and employee can</p>
            </div>
            <div class="formula-nav"><svg class="i9c up"><use href="#chev" /></svg><svg class="spin" viewBox="0 0 6 14"><path d="M0 4.500L3 1l3 3.500zM0 9.500h6L3 13z" fill="#444" /></svg></div>
          </div>

          <div class="sheet">
            <div class="grid">
              <div class="row letters"><span class="rowhead"><i></i></span><span v-for="c in columns" :key="c" class="letter" :class="{ chosen: c === 'E' }">{{ c }}</span></div>
              <div class="row headings"><span class="rowhead">1</span><span v-for="h in headings" :key="h">{{ h }}</span></div>
              <div v-for="r in rows" :key="r.id" class="row data" :class="{ selected: r.id === 2 }" :style="{ height: r.height + 'px' }">
                <span class="rowhead">{{ r.id }}</span>
                <span v-for="(cell, n) in r.cells" :key="n" class="cell">{{ cell }}</span>
              </div>
            </div>
            <div class="vscroll"><svg viewBox="0 0 8 6"><path d="M0 6l4-6 4 6z" fill="#666" /></svg><i></i><svg viewBox="0 0 8 6"><path d="M0 0l4 6 4-6z" fill="#666" /></svg></div>
            <svg class="cursor" viewBox="0 0 12 12"><path d="M4 1h4v3h3v4H8v3H4V8H1V4h3z" fill="#fff" stroke="#222" stroke-width="1.100" /></svg>
          </div>

          <div class="sheet-tabs">
            <svg class="i9c left"><use href="#chev" /></svg>
            <svg class="i9c right"><use href="#chev" /></svg>
            <b class="ellipsis">•••</b>
            <span class="st one">Batch, Result, Feedback</span>
            <span class="st two">Add Exam Module, Add Questions,</span>
            <span class="st now"><b>Em</b></span>
            <div class="hscroll"><i></i><svg viewBox="0 0 6 8"><path d="M0 0l6 4-6 4z" fill="#666" /></svg></div>
          </div>

          <div class="status">
            <span class="ready">Ready</span>
            <svg class="i12" viewBox="0 0 12 12"><circle cx="5" cy="2" r="1.500" fill="none" stroke="#555" /><path d="M.5 3l3 1.500V7L2 11.500M9.500 3l-3 1.500V7M4 11l1-3M6.500 7l5 5M11.500 7l-5 5" fill="none" stroke="#444" /></svg>
            <b>Accessibility: Investigate</b>
            <span class="mode on"><svg class="i12" viewBox="0 0 12 12"><path d="M1 1h10v10H1zM1 4.300h10M1 7.600h10M4.300 1v10M7.600 1v10" fill="none" stroke="#444" /></svg></span>
            <span class="mode"><svg class="i12" viewBox="0 0 12 12"><path d="M1 1h10v10H1zM3.500 3.500h5v5h-5zM4 5.200h4M4 6.800h4" fill="none" stroke="#444" /></svg></span>
            <span class="mode"><svg class="i12" viewBox="0 0 12 12"><path d="M1 1h10v10H1zM4 1v6h4V1M1 7h3M8 5h3" fill="none" stroke="#555" /></svg></span>
            <span class="zoom"><em>−</em><i></i><em>+</em></span>
            <small>100%</small>
          </div>

          <div class="taskbar">
            <svg class="weather" viewBox="0 0 20 22"><circle cx="8.500" cy="13" r="8" fill="url(#gSun)" /><circle cx="13.500" cy="6" r="6" fill="#c8371f" /><text x="13.500" y="9" font-size="8" font-family="Open Sans, sans-serif" fill="#fff" text-anchor="middle">1</text></svg>
            <span class="temp">28°C<br><em>Sunny</em></span>
            <svg class="i18" viewBox="0 0 18 18"><path d="M0 0h8.700v8.700H0zM9.300 0H18v8.700H9.300zM0 9.300h8.700V18H0zM9.300 9.300H18V18H9.300z" fill="url(#gWin)" /></svg>
            <div class="task-search"><svg class="i12" viewBox="0 0 12 12"><circle cx="5" cy="5" r="4.200" fill="none" stroke="#222" stroke-width="1.300" /><path d="M8 8l3.500 3.500" stroke="#222" stroke-width="1.400" /></svg>Search<svg class="manatee" viewBox="0 0 34 20"><path d="M1 19V10l1.500 2L4 9l1 3v7z" fill="#a3c44a" /><path d="M6 11C5 7 8 3 13 2.500 20 1 25 5 29 10.500c1.500.5 3 .5 4 2-1 .8-1.500 1-2 1 .3 1 0 2-.8 3-1.500-1-2.200-2.500-3-4-2 .8-5 .5-7.500 0-.3 2-1.200 3.500-2.700 4.500-1.500-.5-2-2-2.200-4-3 1.500-7.500 2.500-8.800-2z" fill="#7d7984" /><path d="M9 6c5-4 11-2 14 0-4-1-9-1-14 0z" fill="#a5a0aa" /></svg></div>
            <span v-for="a in taskbarApps" :key="a" class="app" :class="a"><svg class="i20"><use :href="'#' + a" /></svg></span>
            <div class="tray">
              <svg class="i9c up"><use href="#chev" /></svg>
              <svg class="i14" viewBox="0 0 14 14"><path d="M2.500 9.500a2.500 2.500 0 01-.5-5C3 1.500 8 1 10 4.500c2 0 3 1.500 3 3L8 7.500l-2 2z" fill="#888" stroke="#444" /><circle cx="10" cy="9.500" r="2.800" fill="#fff" stroke="#2b88d8" stroke-width="1.200" /></svg>
              <svg class="i14" viewBox="0 0 14 14"><path d="M1.500 7A5.300 5.300 0 0111 3.500M12.500 1v3.500H9M1.500 12.500V9.500H5" fill="none" stroke="#333" stroke-width="1.200" /><circle cx="10" cy="10" r="3.500" fill="#ff9a10" /></svg>
              <svg class="i14" viewBox="0 0 14 14"><rect x="5" y="1" width="4" height="7.500" rx="2" fill="#bcd8f5" stroke="#2b6cb8" /><path d="M3 7c0 5 8 5 8 0M7 11v2.500" fill="none" stroke="#2b6cb8" /></svg>
              <span class="lang">ENG<br>IN</span>
              <svg class="i12" viewBox="0 0 12 12"><path d="M.5 5c3-3.500 8-3.500 11 0M2.300 7c2-2.300 5.400-2.300 7.400 0M4.200 9c1-1.200 2.600-1.200 3.600 0" fill="none" stroke="#333" stroke-width="1.100" /><circle cx="6" cy="10.300" r="1" fill="#333" /></svg>
              <svg class="i12" viewBox="0 0 12 12"><path d="M.7 4h2l3-2.500v9L2.700 8h-2z" fill="none" stroke="#333" /><path d="M7.500 4v4M9.500 2.500v7" stroke="#777" /></svg>
              <svg class="i12" viewBox="0 0 12 12"><rect x="1" y="3.500" width="9.500" height="6" rx="1.500" fill="#333" stroke="#222" /><path d="M11.500 5.500v2M2 .5L.5 3h3L2 5.500" stroke="#222" fill="none" /></svg>
              <span class="clock">15:08<br>19-11-2024</span>
              <svg class="i12" viewBox="0 0 12 12"><path d="M6 .5a4 4 0 014 4V8l1.500 1.500H.5L2 8V4.500a4 4 0 014-4zM4.500 10.500h3a1.500 1.500 0 01-3 0z" fill="#0b4fa8" /></svg>
            </div>
          </div>

          <div class="sharing-toast"><i></i><span>teams.microsoft.com is sharing your screen.</span><button>Stop sharing</button><a>Hide</a></div>
          <div class="presenter">Monica (Unverified)</div>
        </section>

        <aside class="gallery">
          <div class="tiles">
            <div v-for="(t, n) in tiles" :key="n" class="tile" :class="[t.tone, { speaking: t.initial }]">
              <span class="avatar" :class="{ letter: t.initial }"><template v-if="t.initial">{{ t.initial }}</template><svg v-else><use href="#person" /></svg></span>
              <span v-if="!t.initial" class="mute"><svg class="i14"><use href="#muted" /></svg></span>
            </div>
          </div>
          <div class="pager"><svg class="i14 prev"><use href="#chev-thin" /></svg><span>1/5</span><svg class="i14 next"><use href="#chev-thin" /></svg></div>
          <div class="tile self"><span class="avatar"><svg><use href="#person" /></svg></span><span class="mute"><svg class="i14"><use href="#muted" /></svg></span></div>
        </aside>
      </div>
    </main>
  </div>
</template>

<style>
html, body { margin: 0; background: #3b3b3b; overflow: hidden; }
</style>

<style scoped>
* { box-sizing: border-box; }
svg { flex: none; display: block; }
button { border: 0; background: none; padding: 0; font: inherit; color: inherit; }
p { margin: 0; }
em { font-style: normal; }
.defs { position: absolute; width: 0; height: 0; }
.i6 { width: 6px; height: 6px; }
.i7 { width: 7px; height: 7px; }
.i8 { width: 8px; height: 8px; }
.i9, .i9c { width: 9px; height: 9px; }
.i10 { width: 10px; height: 10px; }
.i12 { width: 12px; height: 12px; }
.i13 { width: 13px; height: 12px; }
.i14 { width: 14px; height: 14px; }
.i16 { width: 16px; height: 16px; }
.i18 { width: 18px; height: 18px; }
.i20 { width: 19px; height: 19px; }
.i22 { width: 22px; height: 22px; }
.i24 { width: 24px; height: 24px; }
.i26 { width: 26px; height: 22px; }

.screen { width: 1440px; height: 860px; display: flex; flex-direction: column; background: #3b3b3b; color: #fff; font-family: "Open Sans", "Noto Sans", sans-serif; overflow: hidden; white-space: nowrap; }

.tabstrip { height: 34px; flex: none; background: #202020; display: flex; align-items: center; padding-left: 11px; }
.spaces { margin-left: 20px; }
.tabmenu { margin-left: 25px; }
.tab { height: 34px; display: flex; align-items: center; font-size: 12px; letter-spacing: -.22px; }
.tab.active { margin-left: 19px; width: 240px; background: #3b3b3b; border-radius: 8px 8px 0 0; padding-left: 7px; gap: 8px; }
.tab-title { width: 152px; overflow: hidden; margin-left: 2px; -webkit-mask-image: linear-gradient(90deg, #000 85%, transparent); mask-image: linear-gradient(90deg, #000 85%, transparent); }
.tab.active .i9 { margin-left: 1px; }
.tab.second { width: 238px; border-right: 1px solid #666; height: 20px; padding-left: 6px; }
.tab.second span { margin-left: 10px; flex: 1; }
.tab.second .i9 { margin-right: 9px; }
.newtab { margin-left: 16px; }
.window-buttons { margin-left: auto; display: flex; gap: 36px; padding-right: 18px; }

.toolbar { height: 38px; flex: none; display: flex; align-items: center; padding: 0 10px 0 20px; }
.reload { margin-left: 27px; }
.address { width: 1155px; height: 30px; border-radius: 15px; background: #292929; margin: 0 20px 0 19px; padding: 0 16px 0 18px; display: flex; align-items: center; }
.url { font-size: 13.500px; letter-spacing: -.2px; color: #999; margin-left: 15px; width: 993px; flex: none; }
.url b { font-weight: 400; color: #fff; }
.url .path { letter-spacing: 0; }
.address .i16:nth-of-type(n+2) { margin-right: 24px; }
.address .i18 { margin-left: -1px; }
.bar-line { width: 1px; height: 16px; background: #5a5a5a; margin: 0 16px 0 14px; }
.dots { margin: 0 23px 0 28px; }

.meeting { margin: 0 4px; height: 784px; border-radius: 8px; background: #1f1f1f; overflow: hidden; }
.meeting-bar { height: 60px; background: #292929; display: flex; align-items: center; padding-left: 14px; }
.meeting-bar time { font-size: 13px; letter-spacing: -.05px; color: #d6d6d6; margin-left: 13px; width: 704px; }
.actions { display: flex; }
.action { width: 56px; flex: none; height: 44px; padding-top: 2px; display: flex; flex-direction: column; align-items: center; font-size: 11px; letter-spacing: -.2px; color: #d6d6d6; line-height: 16px; }
.glyph { height: 26px; display: flex; align-items: center; gap: 1px; }
.glyph b { font-size: 12px; }
.glyph:has(b) { margin-left: -2px; }
.meeting-line { width: 1px; height: 32px; background: #555; margin: 0 8px; }
.action.off { color: #5c5c5c; }
.action.off.mic { margin-left: 6px; }
.dim { color: #666; margin-left: 2px; }
.lit { margin-left: 2px; }
.action.share { color: #fff; margin-left: 6px; }
.leave { width: 92px; height: 32px; border-radius: 4px; background: #d13438; display: flex; align-items: center; justify-content: center; gap: 8px; font-weight: 700; font-size: 13px; margin-left: 10px; letter-spacing: -.3px; }
.leave svg { width: 20px; height: 10px; }

.stage { display: flex; padding: 30px 5px 0; }
.shared { position: relative; width: 1182px; height: 665px; flex: none; color: #333; background: linear-gradient(90deg, #e5e9ec, #deedef 70%, #e1eded); font-size: 9.200px; letter-spacing: -.1px; }

.titlebar { height: 38px; display: grid; align-items: center; padding-left: 12px; grid-template-columns: 25px 39px 42px 22px 17px 14px 16px 18px 22px 210px 34.500px 282px 308.500px 33px 36px 36px; color: #444; }
.autosave { font-size: 8px; letter-spacing: -.15px; }
.filename { font-size: 9px; letter-spacing: -.04px; }
.toggle { width: 33px; height: 15px; border-radius: 8px; background: #0f703b; color: #fff; font-size: 8px; display: flex; align-items: center; justify-content: space-between; padding: 0 2px 0 5px; }
.toggle i { width: 11px; height: 11px; border-radius: 50%; background: #fff; }
.faded { opacity: .4; }
.customise { margin-left: -4px; }
.search { height: 24px; background: #fafbfb; border-radius: 3px; box-shadow: 0 0 2px #9aa; display: flex; align-items: center; padding-left: 10px; gap: 9px; color: #666; font-size: 10px; letter-spacing: -.1px; }
.initials { justify-self: end; width: 19px; height: 19px; border-radius: 50%; background: #4f716d; color: #dde; font-size: 7.500px; line-height: 19px; text-align: center; }
.titlebar .end { justify-self: end; }

.ribbon-tabs { height: 22px; display: flex; padding-left: 16px; font-size: 9.900px; color: #3c3c3c; }
.ribbon-tabs span em { display: inline-block; height: 21px; line-height: 23px; }
.ribbon-tabs .current { font-weight: 700; border-bottom: 2px solid #1b6f4c; letter-spacing: -.1px; }
.ribbon-tabs .context { color: #1b6f4c; }
.comments, .share-doc { height: 19px; margin-top: 1px; border-radius: 3px; display: flex; align-items: center; justify-content: center; gap: 3px; }
.comments { width: 72px; border: 1px solid #aaa; background: #fff; margin-left: 547px; }
.share-doc { width: 55px; background: #0f703b; color: #fff; margin-left: 6px; }

.ribbon { width: 1170px; height: 77px; margin-left: 6px; border-radius: 6px; background: #fdfdfd; box-shadow: 0 1px 2px #aab4b8; display: flex; color: #444; }
.group { height: 77px; position: relative; display: flex; flex-direction: column; }
.group::after { content: ""; position: absolute; right: 0; top: 4px; height: 68px; width: 1px; background: #d4d6d8; }
.group footer { height: 16px; line-height: 16px; display: flex; justify-content: center; font-size: 8px; position: relative; }
.group footer .i8 { position: absolute; right: 2px; top: 4px; }
.group .body { height: 61px; display: flex; }
.clipboard { width: 133px; }
.clipboard footer { padding-right: 10px; }
.font { width: 180px; }
.font footer { padding-right: 14px; }
.alignment { width: 223px; }
.alignment footer { padding-right: 12px; }
.number { width: 123px; }
.number footer { padding-right: 12px; }
.styles { width: 150px; }
.cells { width: 111px; }
.editing { width: 158px; }
.addins { width: 48px; }
.collapse { margin: 62px 0 0 28px; }
.big { display: flex; flex-direction: column; align-items: center; line-height: 12.300px; text-align: center; font-size: 9px; }
.big > svg:first-child { height: 24px; margin: 5px 0 3px; }
.big > span { display: block; }
.big > .i7 { margin-top: 2px; }
.big span .i7 { display: inline-block; }
.clipboard .big { width: 42px; margin-left: 4px; }
.clipboard .big > svg:first-child { margin: 6px 0 3px 4px; }
.stack { padding-top: 2.500px; font-size: 8.800px; letter-spacing: -.12px; }
.stack > div { height: 19.500px; display: flex; align-items: center; gap: 3px; }
.stack .gap, .wrap .gap { margin-left: 6px; }
.stack .near { margin-left: -2px; }
.column { display: flex; flex-direction: column; }
.group .body.column { flex-direction: column; }
.line { display: flex; align-items: center; }
.line hr { width: 1px; height: 18px; margin: 0; border: 0; background: #d0d0d0; }
.select { height: 19px; border: 1px solid #a8a8a8; border-radius: 3px; display: flex; align-items: center; justify-content: space-between; padding: 0 0 0 1px; background: #fff; }
.font-1 { margin: 9px 0 0 6px; gap: 2.500px; }
.font-1 .select:first-child { width: 88px; }
.font-1 .select:nth-child(2) { width: 38px; }
.grow-a { font-size: 12.500px; width: 19px; margin-left: 2px; line-height: 18px; display: flex; }
.grow-a.small { font-size: 11px; }
.grow-a .i6 { margin-top: 1px; }
.font-2 { display: grid; grid-template-columns: 20px 19px 14px 10px 5px 18px 10px 5px 18px 13px 18px 8px; margin: 5px 0 0 13px; height: 20px; font-size: 10px; }
.font-2 i { font-family: "Liberation Serif", serif; font-size: 11px; }
.colour-a { width: 12px; text-align: center; height: 14px; line-height: 11px; border-bottom: 3px solid #f01800; font-size: 11px; }
.alignment .align-row { display: grid; grid-template-columns: 17px 20px 19px 7px 18px 12px; height: 20px; padding-left: 10px; width: 109px; }
.align-row svg.i12 { width: 11px; height: 11px; }
.align-row:nth-child(1) { margin-top: 8px; }
.align-row:nth-child(1) > .i14 { margin-left: -3px; }
.align-row:nth-child(1) > .i7 { margin-left: -5px; }
.align-row:nth-child(2) { margin-top: 5px; grid-template-columns: 19.500px 20px 16.500px 4.500px 20px 12px; }
.pressed { width: 18px; height: 18px; border: 1px solid #999; border-radius: 3px; background: #eee; display: flex; align-items: center; justify-content: center; margin-left: -1px; }
.split { width: 1px; height: 48px; background: #d8d8d8; margin-top: 8px; }
.wrap { padding-left: 8px; letter-spacing: -.17px; }
.wrap .line { height: 20px; gap: 3px; margin-top: 8px; }
.wrap .line + .line { margin-top: 5px; }
.disabled { opacity: .45; }
.wide { width: 112px; margin: 9px 0 0 6px; }
.number-2 { display: grid; grid-template-columns: 17px 15px 23px 12px 6px 20px 14px; margin: 5px 0 0 9px; height: 20px; }
.percent { font-size: 12.500px; }
.comma { width: 7px; height: 10px; }
.dec { font-size: 7.500px; line-height: 7px; }
.dec s { text-decoration: none; color: #2b88d8; }
.styles .big:nth-child(1) { width: 56px; margin-left: 6px; }
.styles .big:nth-child(2) { width: 48px; }
.styles .big:nth-child(3) { width: 34px; }
.cells .big { width: 33.300px; }
.cells .big:first-child { margin-left: 5.500px; }
.editing .stack { width: 76px; padding-left: 10px; }
.editing .big { width: 35px; }
.editing .sort { margin-left: 5px; }
.editing .big > svg:first-child { margin: 6px 0 2px; }
.addins .big { width: 47px; }

.formula-bar { display: flex; height: 44px; padding: 7px 0 0 6px; color: #333; }
.name-box, .fx { height: 16px; background: #fff; border-radius: 2px; display: flex; align-items: center; }
.name-box { width: 77px; justify-content: space-between; padding: 0 3px 0 4px; }
.grip { width: 18px; text-align: center; font-weight: 700; font-size: 12px; line-height: 16px; }
.fx { width: 55px; padding-left: 4px; gap: 8px; }
.fx .i10 { color: #bbb; }
.fx i { font: italic 13.500px "Liberation Serif", serif; }
.formula { width: 1000px; height: 31px; background: #fff; margin-left: 4px; padding: 1px 0 0 8px; border-radius: 2px 0 0 2px; font-family: Lato, sans-serif; font-size: 10.500px; line-height: 14.700px; letter-spacing: -.107px; }
.second-line { letter-spacing: -.088px; }
.formula-nav { width: 16px; height: 31px; background: #fff; padding-top: 4px; display: flex; flex-direction: column; align-items: center; gap: 3px; }
.spin { width: 5px; height: 13px; }
.up { transform: rotate(180deg); }

.sheet { position: relative; display: flex; height: 406px; padding-top: 1px; background: #f0f0f0; }
.grid { width: 1166px; height: 405px; overflow: hidden; font: 10.100px "Liberation Sans", Arial, sans-serif; letter-spacing: -.01px; color: #111; }
.row { display: grid; grid-template-columns: 21px 104px 105px 158px 346px 139px 104px 105px 84px; }
.row > span { overflow: hidden; min-width: 0; padding-left: 2px; }
.letters { height: 13px; background: #f1f1f1; }
.row > .letter { text-align: center; line-height: 13px; border-right: 1px solid #e2e2e2; color: #555; padding: 0; font-size: 10.500px; }
.row > .letter:last-child { padding-left: 20px; border-right: 0; }
.row > .letter.chosen { background: #dedede; border-bottom: 2px solid #1b6f4c; color: #1b6f4c; }
.letters .rowhead i { display: block; margin: 0 0 2px 8px; border: 4px solid transparent; border-right-color: #ccc; border-bottom-color: #ccc; width: 0; height: 0; }
.row > .rowhead { background: #f0f0f0; color: #666; text-align: center; padding: 0; border-right: 1px solid #aaa; display: flex; align-items: flex-end; justify-content: center; font-size: 10.500px; line-height: 12px; }
.headings { height: 16px; line-height: 17px; background: #5d4489; color: #120c24; }
.row.headings > .rowhead { line-height: 14px; }
.row > span:nth-child(6):not(.letter) { padding-left: 3px; }
.data { line-height: 12px; background: #fff; align-items: center; }
.data:nth-child(even) { background: #f8f9fa; }
.data .rowhead { align-self: stretch; border-bottom: 1px solid #ddd; }
.row.data > .cell:nth-child(2) { padding-left: 8px; }
.row.data > .cell:nth-child(8) { margin-right: 2px; }
.row.selected > .rowhead { background: #dfdfdf; border-right: 2px solid #1b6f4c; }
.row.selected { background: #fff; }
.row.selected > .cell:nth-child(6) { align-self: stretch; line-height: 72px; border: 1px solid #1b6f4c; padding-left: 2px; }
.vscroll { width: 16px; display: flex; flex-direction: column; align-items: center; padding: 3px 0 2px; background: #f0f0f0; }
.vscroll svg { width: 8px; height: 6px; }
.vscroll i { width: 7px; height: 301px; border-radius: 4px; background: #686868; margin: 3px 0 84px; }
.cursor { position: absolute; left: 679px; top: 56px; width: 11px; height: 11px; }

.sheet-tabs { height: 24px; background: #efe9e4; display: flex; align-items: center; font-size: 10.700px; letter-spacing: -.25px; color: #444; padding: 0 0 0 17px; }
.left { transform: rotate(90deg); }
.right { transform: rotate(-90deg); margin-left: 16px; }
.ellipsis { font-size: 7px; letter-spacing: 0; margin-left: 15px; width: 29px; }
.st { height: 24px; line-height: 24px; }
.one { width: 123px; border-right: 1px solid #e2dcd6; letter-spacing: -.28px; }
.two { width: 190px; padding-left: 11px; letter-spacing: -.2px; }
.now { width: 337px; background: #fff; padding-left: 7px; line-height: 21px; }
.now b { display: inline-block; height: 20px; border-bottom: 2px solid #1b6f4c; }
.hscroll { flex: 1; height: 24px; background: #eeeeef; display: flex; align-items: center; }
.hscroll i { width: 269px; height: 7px; border-radius: 4px; background: #6c6c6c; }
.hscroll svg { width: 6px; height: 8px; margin-left: 142px; }

.status { height: 18px; background: #f5f5f5; border-bottom: 1px solid #c2c4c6; display: flex; align-items: center; font-size: 7.900px; line-height: 17px; padding: 0 0 0 8px; }
.ready { width: 38px; }
.status b { margin-left: 2px; width: 892px; }
.mode { width: 31px; height: 17px; display: grid; place-items: center; }
.mode.on { background: #e1e2e4; }
.zoom { display: flex; align-items: center; gap: 3px; margin-left: 5px; font-size: 11px; width: 103px; }
.zoom i { width: 77px; height: 8px; background: linear-gradient(#666, #666) 38px 0 / 4px 8px no-repeat, linear-gradient(#777, #777) 0 4px / 100% 1px no-repeat; }
.status small { font-size: 7.500px; margin-left: 3px; }

.taskbar { height: 36px; background: #f1f2f3; display: flex; align-items: center; padding: 0 0 1px 16px; }
.weather { width: 20px; height: 22px; margin-top: -6px; }
.temp { width: 279px; margin-left: 4px; line-height: 12px; font-size: 9px; }
.temp em { color: #777; }
.task-search { width: 166px; height: 24px; border-radius: 12px; background: #fcfcfc; box-shadow: 0 0 2px #bbb; margin: 0 2.500px 0 12px; display: flex; align-items: center; padding-left: 7px; gap: 7px; font-size: 10.300px; color: #555; }
.manatee { width: 34px; height: 20px; margin-left: 62px; }
.app { width: 33.900px; height: 35px; display: grid; place-items: center; position: relative; }
.chrome::after, .folder::after, .word::after, .excel::after { content: ""; position: absolute; bottom: 3px; width: 5px; height: 2px; border-radius: 1px; background: #888; }
.excel::after { width: 12px; background: #0c6dc8; }
.excel::before { content: ""; position: absolute; inset: 3px 5px 5px; background: #fff; border-radius: 3px; z-index: -1; }
.excel { z-index: 0; }
.tray { display: grid; grid-template-columns: 21.500px 25px 25px 25.500px 33px 19px 18px 22px 57px 12px; align-items: center; margin-left: 52px; }
.lang, .clock { font-size: 9.200px; line-height: 12px; text-align: center; letter-spacing: -.1px; width: 22px; }
.clock { text-align: right; width: 51px; letter-spacing: .05px; }

.sharing-toast { position: absolute; left: 430px; top: 584px; width: 323px; height: 38px; background: #fdfdfd; box-shadow: 0 1px 2px #999; display: flex; align-items: center; padding-left: 8px; }
.sharing-toast > i { width: 4px; height: 9px; border: solid #ccc; border-width: 0 1px; }
.sharing-toast span { width: 178px; margin: 0 8px; font-size: 9px; letter-spacing: -.16px; }
.sharing-toast button { width: 82px; height: 30px; border-radius: 15px; background: #0b57d0; color: #fff; font-weight: 700; font-size: 9.500px; letter-spacing: -.2px; }
.sharing-toast a { margin-left: 8px; color: #1a5fb8; text-decoration: underline; font-size: 9.200px; }
.presenter { position: absolute; left: 8px; top: 657px; width: 116px; height: 24px; border-radius: 4px; background: rgba(0, 0, 0, .58); color: #fff; font-size: 11.500px; line-height: 25px; text-align: center; letter-spacing: -.2px; font-weight: 600; }

.gallery { width: 236px; margin: 24px 0 0 4px; }
.tiles { display: flex; flex-wrap: wrap; gap: 4px; justify-content: center; }
.tile { position: relative; width: 116px; height: 86px; border-radius: 6px; border: 1px solid #444; display: grid; place-items: center; }
.tile.speaking { border: 3px solid #7f85f5; }
.avatar { width: 48px; height: 48px; border-radius: 50%; background: #949494; display: grid; place-items: center; box-shadow: 0 1px 4px rgba(0, 0, 0, .4); }
.avatar svg { width: 22.500px; height: 25px; }
.avatar.letter { background: #f1d6ce; color: #79301f; font: 600 18.500px "Open Sans", sans-serif; line-height: 48px; }
.mute { position: absolute; left: 3px; bottom: 3px; width: 28px; height: 24px; border-radius: 4px; background: rgba(13, 13, 13, .9); display: grid; place-items: center; }
.t1 { background: linear-gradient(115deg, #2d2925, #222 50%, #24222a 75%, #2e2928); }
.t2 { background: linear-gradient(160deg, #292a29, #33312c 50%, #222c32); }
.t3 { background: radial-gradient(circle at 45% 10%, #362a25, #25292a 65%, #202222); }
.t4 { background: linear-gradient(135deg, #202025, #202022 55%, #2b262b); }
.t5 { background: linear-gradient(#1c1c1c 30%, #33272a); }
.t6 { background: radial-gradient(circle at 50% 30%, #352f27, #222525 75%); }
.t7 { background: radial-gradient(circle at 90% 40%, #3a3027, #282625 60%, #2c2225); }
.t8 { background: linear-gradient(165deg, #282b2b, #292b31 50%, #332f31); }
.t9 { background: linear-gradient(145deg, #302225, #26232b 50%, #292b2d); }
.pager { display: flex; align-items: center; justify-content: center; gap: 9.500px; height: 40px; padding-bottom: 2px; font-size: 13.500px; font-weight: 500; letter-spacing: -.2px; }
.prev { transform: rotate(90deg); color: #666; }
.next { transform: rotate(-90deg); }
.tile.self { width: 236px; height: 131px; background: radial-gradient(ellipse at 100% 100%, #3b3023, transparent 75%), linear-gradient(150deg, #272e31, #2b3133 40%, #302e28); }
.self .avatar { width: 64px; height: 64px; }
.self .avatar svg { width: 30px; height: 34px; }
.self .mute { left: 7px; bottom: 7px; }
</style>
